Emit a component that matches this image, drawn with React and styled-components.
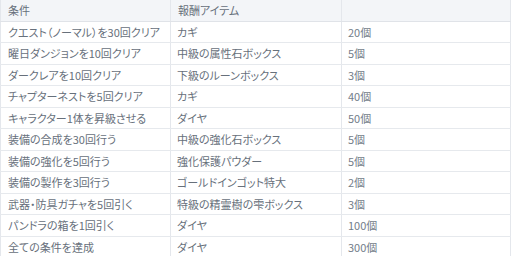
import React from 'react'
import styled, { createGlobalStyle } from 'styled-components'

const Global = createGlobalStyle`
  html, body { margin:0; padding:0; background:#ffffff; }
  body { width:512px; height:256px; overflow:hidden; }
`

const Table = styled.table`
  width:510px;
  border-collapse:collapse;
  table-layout:fixed;
  font-family:"Noto Sans CJK JP", "Liberation Sans", sans-serif;
  font-feature-settings:"palt";
  font-size:11px;
  color:#67707b;
  border-bottom:1px solid #c9cdd3;
`

const HeadCell = styled.th`
  height:20.5px;
  padding:0 0 0 7px;
  background:#f3f5f8;
  font-weight:normal;
  text-align:left;
  border-right:1px solid #e4e7ec;
  border-bottom:1px solid #e0e3e8;
  &:first-child { border-left:1px solid #e4e7ec; }
`

const Cell = styled.td`
  height:20.5px;
  padding:0 0 0 6px;
  white-space:nowrap;
  border-right:1px solid #e4e7ec;
  border-bottom:1px solid #e6e9ed;
  color:${p => (p.$num ? '#737d89' : '#67707b')};
  &:first-child { border-left:1px solid #e4e7ec; padding-left:7px; }
`

const rows = [
  ['クエスト（ノーマル）を30回クリア', 'カギ', '20個'],
  ['曜日ダンジョンを10回クリア', '中級の属性石ボックス', '5個'],
  ['ダークレアを10回クリア', '下級のルーンボックス', '3個'],
  ['チャプターネストを5回クリア', 'カギ', '40個'],
  ['キャラクター1体を昇級させる', 'ダイヤ', '50個'],
  ['装備の合成を30回行う', '中級の強化石ボックス', '5個'],
  ['装備の強化を5回行う', '強化保護パウダー', '5個'],
  ['装備の製作を3回行う', 'ゴールドインゴット特大', '2個'],
  ['武器・防具ガチャを5回引く', '特級の精霊樹の雫ボックス', '3個'],
  ['パンドラの箱を1回引く', 'ダイヤ', '100個'],
  ['全ての条件を達成', 'ダイヤ', '300個'],
]

const App = () => {
  return (
    <>
      <Global />
      <Table>
        <colgroup>
          <col style={{ width: 170 }} />
          <col style={{ width: 171 }} />
          <col style={{ width: 169 }} />
        </colgroup>
        <thead>
          <tr>
            <HeadCell>条件</HeadCell>
            <HeadCell>報酬アイテム</HeadCell>
            <HeadCell></HeadCell>
          </tr>
        </thead>
        <tbody>
          {rows.map(r => (
            <tr key={r[0]}>
              <Cell>{r[0]}</Cell>
              <Cell>{r[1]}</Cell>
              <Cell $num>{r[2]}</Cell>
            </tr>
          ))}
        </tbody>
      </Table>
    </>
  )
}

export default App
